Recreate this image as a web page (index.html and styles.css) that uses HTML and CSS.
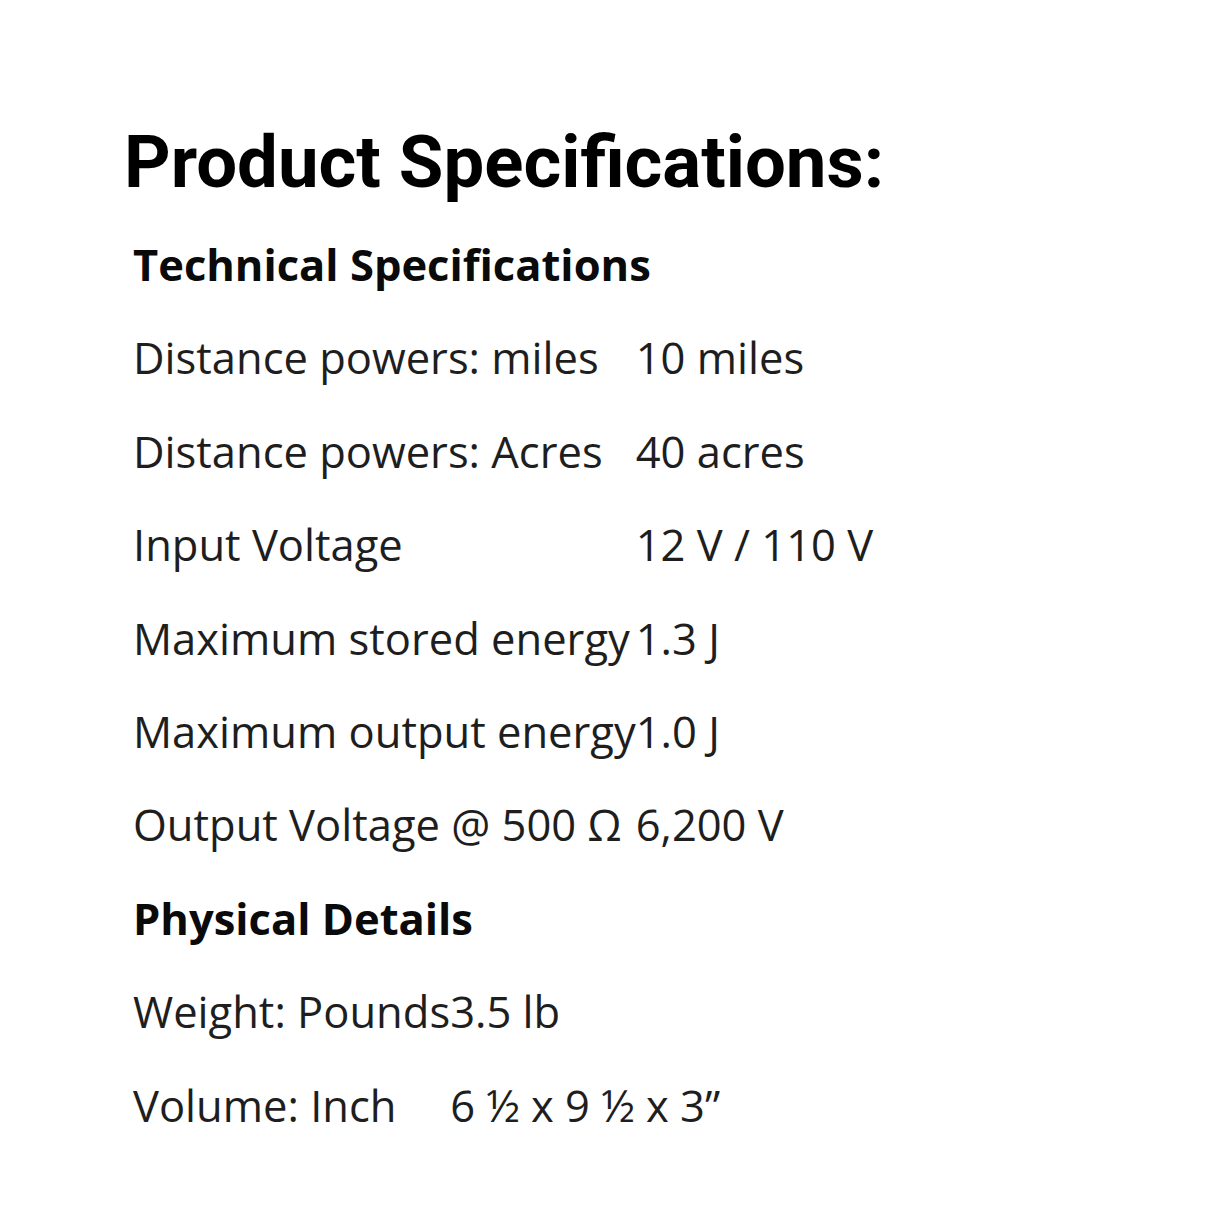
FILE: index.html
```html
<!DOCTYPE html>
<html lang="en">
<head>
<meta charset="utf-8">
<title>Product Specifications</title>
<link rel="stylesheet" href="styles.css">
</head>
<body>
<main class="page">
  <h1 class="title">Product Specifications:</h1>
  <section class="specs">
    <h2 class="group-title">Technical Specifications</h2>
    <div class="spec-table">
      <div class="label">Distance powers: miles</div><div class="value">10 miles</div>
      <div class="label">Distance powers: Acres</div><div class="value">40 acres</div>
      <div class="label">Input Voltage</div><div class="value">12 V / 110 V</div>
      <div class="label">Maximum stored energy</div><div class="value">1.3 J</div>
      <div class="label">Maximum output energy</div><div class="value">1.0 J</div>
      <div class="label">Output Voltage @ 500 Ω</div><div class="value">6,200 V</div>
    </div>
    <h2 class="group-title">Physical Details</h2>
    <div class="spec-table">
      <div class="label">Weight: Pounds</div><div class="value">3.5 lb</div>
      <div class="label">Volume: Inch</div><div class="value">6 ½ x 9 ½ x 3”</div>
    </div>
  </section>
</main>
</body>
</html>
```

FILE: styles.css
```css
html, body {
  margin: 0;
  padding: 0;
  background: #ffffff;
}

.page {
  padding: 118px 0 0 124px;
}

.title {
  margin: 0;
  font-family: "Roboto", "Liberation Sans", sans-serif;
  font-weight: 700;
  font-size: 72.5px;
  line-height: 90px;
  color: #000;
}

.specs {
  margin-top: 10px;
  padding-left: 9px;
  font-family: "Open Sans", "Liberation Sans", sans-serif;
  font-size: 43.5px;
  color: #1e1e1e;
}

.group-title {
  margin: 0;
  font-size: 43.5px;
  font-weight: 700;
  line-height: 93.4px;
  color: #0a0a0a;
}

.spec-table {
  display: grid;
  grid-template-columns: max-content max-content;
  line-height: 93.4px;
}
```
